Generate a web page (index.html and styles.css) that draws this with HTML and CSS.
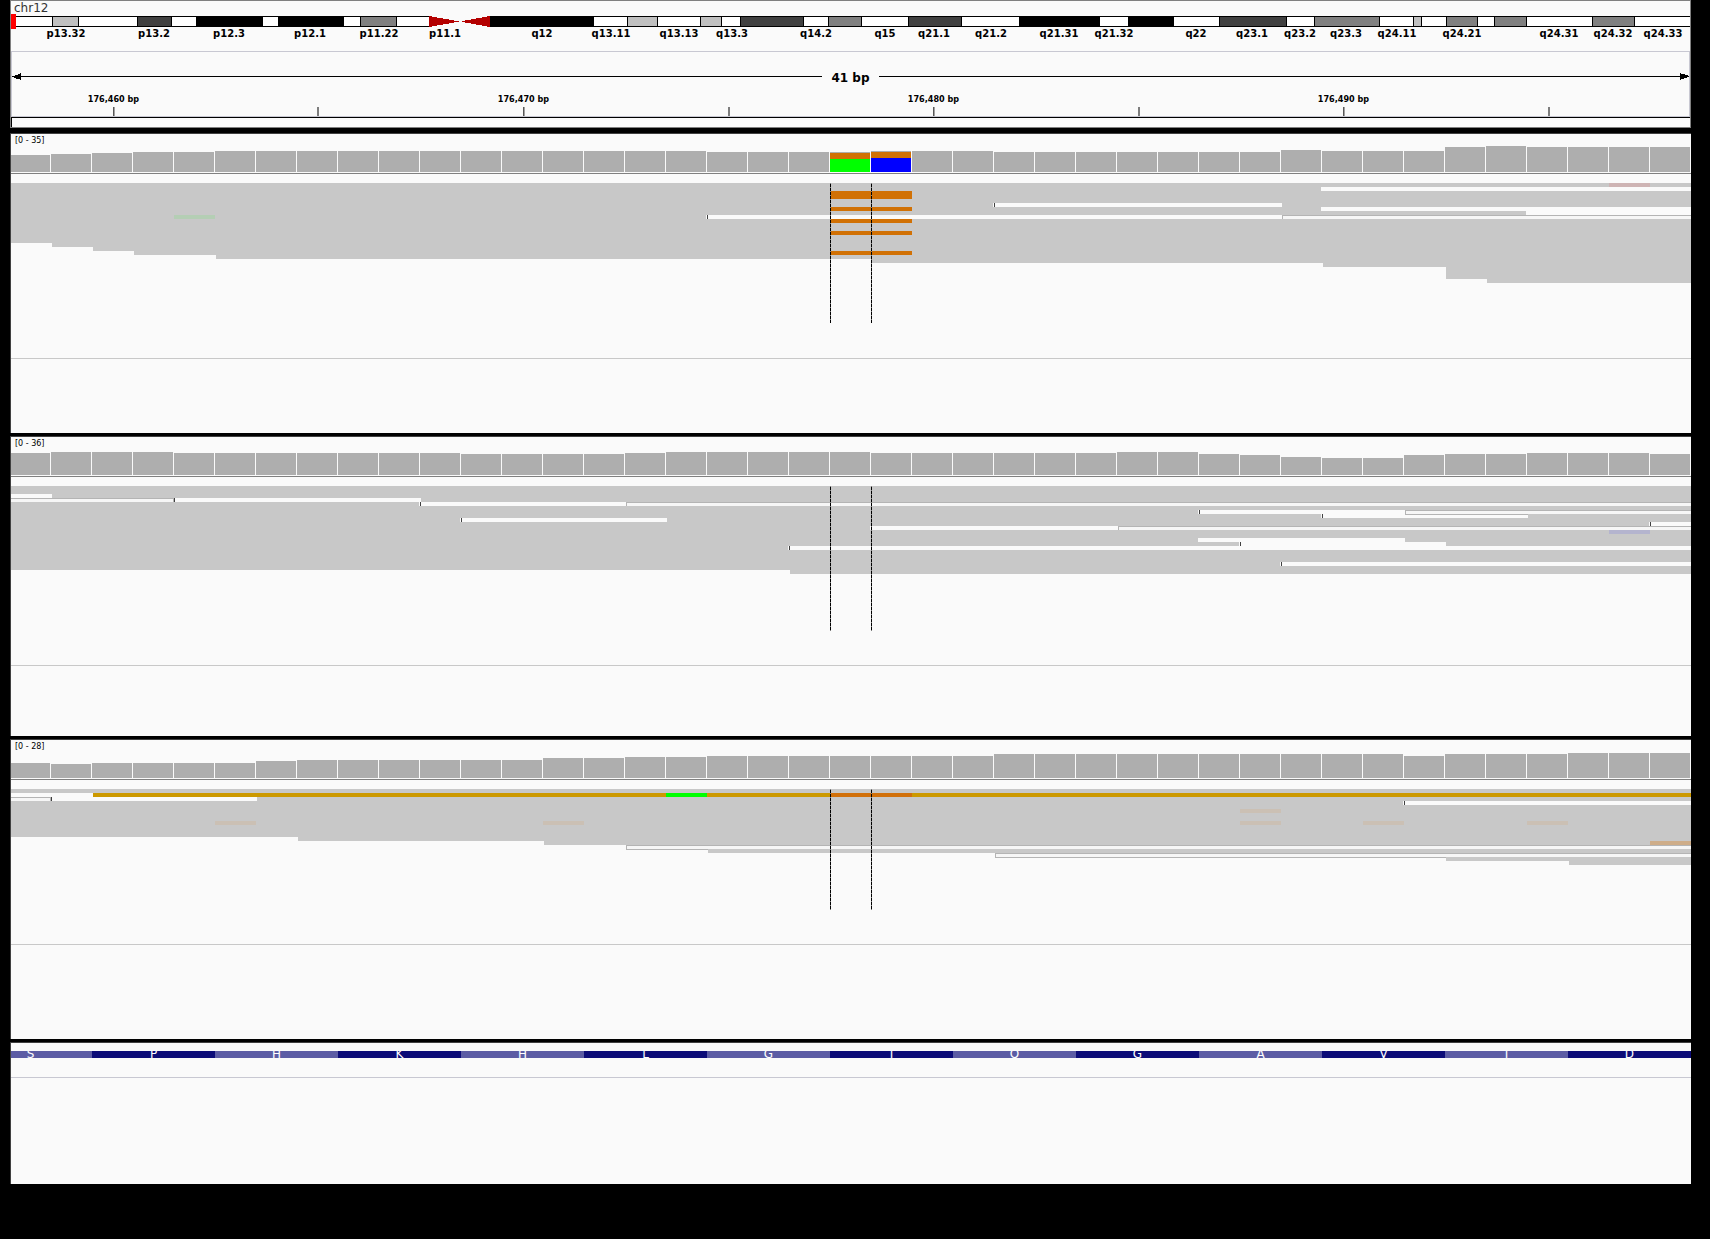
FILE: index.html
```html
<!DOCTYPE html>
<html lang="en">
<head>
<meta charset="utf-8">
<meta name="viewport" content="width=device-width, initial-scale=1">
<title>chr12:176,458-176,498</title>
<link rel="stylesheet" href="styles.css">
</head>
<body>
<main class="browser">
  <header class="locus">
    <h1 class="chromosome">chr12</h1>
    <svg class="ideogram" id="ideogram" viewBox="0 0 1679 15" preserveAspectRatio="none" role="img" aria-label="Chromosome ideogram"></svg>
    <div class="band-names" id="band-names"></div>
    <div class="ruler">
      <div class="span-row">
        <div class="arrow">
          <svg class="arrow-head" viewBox="0 0 9 7" aria-hidden="true"><path d="M0 3h3V2h3V1h2V0h1v7H8V6H4V5H2V4H0z"/></svg>
          <span class="arrow-line"></span>
        </div>
        <span class="span-size">41 bp</span>
        <div class="arrow">
          <span class="arrow-line"></span>
          <svg class="arrow-head" viewBox="0 0 9 7" aria-hidden="true"><path d="M9 3H8V2H5V1H1V0H0v7h1V6h3V5h3V4h2z"/></svg>
        </div>
      </div>
      <div class="ticks" id="ticks"></div>
    </div>
    <div class="region-bar"></div>
  </header>

  <section class="track">
    <p class="range">[0 - 35]</p>
    <svg class="coverage" viewBox="0 0 1680 26" preserveAspectRatio="none"></svg>
    <div class="reads reads-first"><svg class="alignments" viewBox="0 0 1680 140" preserveAspectRatio="none"></svg></div>
  </section>
  <section class="track">
    <p class="range">[0 - 36]</p>
    <svg class="coverage" viewBox="0 0 1680 26" preserveAspectRatio="none"></svg>
    <div class="reads reads-second"><svg class="alignments" viewBox="0 0 1680 145" preserveAspectRatio="none"></svg></div>
  </section>
  <section class="track">
    <p class="range">[0 - 28]</p>
    <svg class="coverage" viewBox="0 0 1680 26" preserveAspectRatio="none"></svg>
    <div class="reads reads-third"><svg class="alignments" viewBox="0 0 1680 121" preserveAspectRatio="none"></svg></div>
  </section>
  <section class="track gene-track">
    <div class="gene"><div class="codons">
      <span>S</span><span>P</span><span>H</span><span>K</span><span>H</span><span>L</span><span>G</span><span>I</span><span>Q</span><span>G</span><span>A</span><span>V</span><span>I</span><span>D</span>
    </div></div>
  </section>
</main>
<script src="tracks.js"></script>
</body>
</html>
```

FILE: styles.css
```css
* {
  box-sizing: border-box;
}

body {
  margin: 0;
  background: #000;
  color: #000;
  font-family: "DejaVu Sans", Verdana, sans-serif;
}

.browser {
  padding: 0 19px 0 10px;
}

svg {
  display: block;
  shape-rendering: crispEdges;
}

/* Header: chromosome name, ideogram and ruler */
.locus {
  margin-bottom: 5px;
  border: 1px solid #808080;
  background: #fafafa;
}

.chromosome {
  height: 13px;
  margin: 0;
  padding-left: 3px;
  color: #333;
  font-size: 12px;
  font-weight: 400;
  line-height: 15px;
}

.ideogram {
  width: 100%;
  height: 15px;
}

.band-names {
  position: relative;
  height: 22px;
  font-size: 10px;
  font-weight: 700;
  line-height: 10px;
}

.band-names span {
  position: absolute;
  top: 0;
  transform: translateX(-50%);
}

.ruler {
  padding-top: 19px;
  border: 1px solid #c8c8d2;
}

.span-row {
  display: flex;
  height: 14px;
}

.arrow {
  display: flex;
  flex: 1;
  align-items: center;
  height: 7px;
  margin-top: 2px;
}

.arrow-head {
  width: 9px;
  height: 7px;
}

.arrow-line {
  flex: 1;
  height: 1px;
  background: #000;
}

.span-size {
  padding: 0 9px;
  font-size: 12px;
  font-weight: 700;
  line-height: 14px;
}

.ticks {
  position: relative;
  height: 31px;
}

.tick {
  position: absolute;
  bottom: 0;
  display: flex;
  flex-direction: column;
  align-items: center;
  gap: 2px;
  transform: translateX(-50%);
  font-family: "DejaVu Sans Condensed", "DejaVu Sans", sans-serif;
  font-size: 9px;
  font-weight: 700;
  line-height: 12px;
  white-space: nowrap;
}

.tick-mark {
  width: 1px;
  height: 9px;
  background: #000;
}

.region-bar {
  height: 10px;
  border-top: 1px solid #000;
  border-left: 1px solid #000;
}

/* Alignment tracks */
.track {
  min-height: 300px;
  margin-bottom: 3px;
  border-top: 1px solid #404040;
  border-left: 1px solid #404040;
  background: #fafafa;
}

.range {
  height: 12px;
  margin: 0;
  padding-left: 4px;
  font-size: 8px;
  line-height: 14px;
}

.coverage {
  width: 100%;
  height: 26px;
}

.reads {
  margin-top: 1px;
  padding-top: 9px;
  border-top: 1px solid #808080;
  border-bottom: 1px solid #c8c8c8;
}

.reads-first {
  height: 186px;
}

.reads-second {
  height: 190px;
}

.reads-third {
  height: 166px;
}

.alignments {
  width: 100%;
}

/* Gene track */
.gene-track {
  min-height: 142px;
  margin-bottom: 0;
}

.gene {
  height: 35px;
  padding-top: 8px;
  border-bottom: 1px solid #c8c8d2;
  overflow: hidden;
}

.codons {
  display: grid;
  grid-template-columns: repeat(14, 1fr);
  width: calc(100% * 42 / 41 + 1px);
  margin-left: calc(-100% / 41 - 1px);
}

.codons span {
  height: 7px;
  overflow: hidden;
  background: #5c5ca4;
  color: #fff;
  font-size: 12px;
  line-height: 6px;
  text-align: center;
}

.codons span:nth-child(even) {
  background: #0c0c78;
}
```

FILE: tracks.js
```js
const NS = "http://www.w3.org/2000/svg";
const BASES = 41;
const BASE_WIDTH = 41;
const WIDTH = 1680;
const ROW = 4;

const GREY = "#c8c8c8", BACK = "#fafafa", ORANGE = "#d17105", GREEN = "#00ff00";

function rect(svg, x, y, w, h, fill) {
  const r = document.createElementNS(NS, "rect");
  Object.entries({ x, y, width: w, height: h, fill }).forEach(([k, v]) => r.setAttribute(k, v));
  svg.append(r);
}

// Left edge of a base column
const at = (base) => Math.min(base * BASE_WIDTH, WIDTH);

/* Ideogram: [start, end, shade] with one-pixel black seams */
const ideogram = document.getElementById("ideogram");
const W = "#fff", L = "#c0c0c0", M = "#808080", D = "#404040";
rect(ideogram, 0, 2, 1679, 11, "#000");
[
  [0, 41, W], [42, 67, L], [68, 126, W], [127, 160, D], [161, 185, W], [252, 267, W],
  [333, 349, W], [350, 385, M], [386, 418, W], [583, 616, W], [617, 646, L], [647, 689, W],
  [690, 710, L], [711, 729, W], [730, 792, D], [793, 817, W], [818, 850, M], [851, 897, W],
  [898, 950, D], [951, 1008, W], [1089, 1117, W], [1163, 1208, W], [1209, 1275, D],
  [1276, 1303, W], [1304, 1368, M], [1369, 1402, W], [1403, 1410, L], [1411, 1435, W],
  [1436, 1466, M], [1467, 1483, W], [1484, 1515, M], [1516, 1581, W], [1582, 1623, M], [1624, 1679, W]
].forEach(([a, b, c]) => rect(ideogram, a, 3, b - a, 9, c));
rect(ideogram, 418, 2, 61, 11, BACK);
const centromere = document.createElementNS(NS, "path");
centromere.setAttribute("d", "M418 2 449 7.5 418 13zM479 2 449 7.5 479 13z");
centromere.setAttribute("fill", "#b40000");
ideogram.append(centromere);
rect(ideogram, 448, 7, 3, 1, BACK);
rect(ideogram, 0, 0, 5, 15, "#ff0000");

const names = document.getElementById("band-names");
[
  ["p13.32", 55], ["p13.2", 143], ["p12.3", 218], ["p12.1", 299], ["p11.22", 368], ["p11.1", 434],
  ["q12", 531], ["q13.11", 600], ["q13.13", 668], ["q13.3", 721], ["q14.2", 805], ["q15", 874],
  ["q21.1", 923], ["q21.2", 980], ["q21.31", 1048], ["q21.32", 1103], ["q22", 1185], ["q23.1", 1241],
  ["q23.2", 1289], ["q23.3", 1335], ["q24.11", 1386], ["q24.21", 1451], ["q24.31", 1548],
  ["q24.32", 1602], ["q24.33", 1652]
].forEach(([name, x]) => {
  const s = document.createElement("span");
  s.textContent = name;
  s.style.left = (x / 1679) * 100 + "%";
  names.append(s);
});

const ticks = document.getElementById("ticks");
["176,460 bp", "", "176,470 bp", "", "176,480 bp", "", "176,490 bp", ""].forEach((label, k) => {
  const t = document.createElement("div");
  t.className = "tick";
  t.style.left = ((101.5 + 205 * k) / 1677) * 100 + "%";
  if (label) {
    const s = document.createElement("span");
    s.textContent = label;
    t.append(s);
  }
  const m = document.createElement("span");
  m.className = "tick-mark";
  t.append(m);
  ticks.append(t);
});

/*
 * depth:   [height, number of bases]
 * steps:   [first base, rows] lower edge of the read pile
 * gaps:    [row, from, to, tick] space between two reads
 * hollow:  [row, from, to, lower edge to] reads with mapping quality zero
 * reads:   [row, from, to, colour]
 * marks:   [row, from, to, colour] mismatched bases
 */
const tracks = [
  {
    depth: [[17, 1], [18, 1], [19, 1], [20, 2], [21, 12], [20, 4], [21, 3], [20, 7], [22, 1], [21, 3], [25, 1], [26, 1], [25, 4]],
    alleles: [[20, 13, 6, GREEN], [21, 14, 6, "#0000ff"]],
    steps: [[0, 15], [1, 16], [2, 17], [3, 18], [5, 19], [21, 20], [32, 21], [35, 24], [36, 25]],
    gaps: [[5, 24, 31, 1], [8, 17, 31, 1], [1, 32, 41], [6, 32, 41], [7, 37, 41]],
    hollow: [[8, 31, 41]],
    reads: [],
    marks: [
      [8, 4, 5, "#b4ceb4"], [0, 39, 40, "#ceb4b4"],
      [2, 20, 22, ORANGE], [3, 20, 22, ORANGE], [6, 20, 22, ORANGE],
      [9, 20, 22, ORANGE], [12, 20, 22, ORANGE], [17, 20, 22, ORANGE]
    ],
    guide: 140
  },
  {
    depth: [[22, 1], [23, 3], [22, 7], [21, 4], [22, 1], [23, 5], [22, 6], [23, 2], [21, 1], [20, 1], [18, 1], [17, 2], [20, 1], [21, 2], [22, 3], [21, 1]],
    alleles: [],
    steps: [[0, 21], [19, 22]],
    gaps: [
      [2, 0, 1], [3, 4, 10, 1], [4, 10, 15, 1], [8, 11, 16, 1], [10, 21, 27], [15, 19, 41, 1],
      [6, 29, 34, 1], [7, 32, 37, 1], [9, 40, 41, 1], [13, 29, 34], [14, 30, 35, 1], [19, 31, 41, 1]
    ],
    hollow: [[3, 0, 4], [4, 15, 41], [10, 27, 41], [6, 34, 41, 37]],
    reads: [],
    marks: [[11, 39, 40, "#b4b4ce"]],
    guide: 145
  },
  {
    depth: [[15, 1], [14, 1], [15, 4], [17, 1], [18, 6], [20, 2], [21, 2], [22, 7], [24, 10], [22, 1], [24, 3], [25, 3]],
    alleles: [],
    steps: [[0, 12], [7, 13], [13, 14]],
    gaps: [[1, 0, 2], [2, 1, 6, 1], [3, 34, 41, 1]],
    hollow: [[2, 0, 1], [14, 15, 41, 17], [16, 24, 41, 35]],
    reads: [[1, 2, 41, "#cc9900"], [15, 17, 41, GREY], [17, 35, 41, GREY], [18, 38, 41, GREY]],
    marks: [
      [1, 16, 17, GREEN], [1, 20, 22, "#d1700a"],
      [5, 30, 31, "#cbc0b4"], [8, 5, 6, "#cbc0b4"], [8, 13, 14, "#cbc0b4"], [8, 30, 31, "#cbc0b4"],
      [8, 33, 34, "#cbc0b4"], [8, 37, 38, "#cbc0b4"], [13, 40, 41, "#cead89"]
    ],
    guide: 121
  }
];

document.querySelectorAll(".coverage").forEach((svg, n) => {
  let base = 0;
  tracks[n].depth.forEach(([h, count]) => {
    for (let i = 0; i < count; i++, base++) rect(svg, at(base) - 1, 26 - h, 40, h, "#aeaeae");
  });
  tracks[n].alleles.forEach(([b, low, high, colour]) => {
    rect(svg, at(b) - 1, 26 - low, 40, low, colour);
    rect(svg, at(b) - 1, 26 - low - high, 40, high, ORANGE);
  });
});

document.querySelectorAll(".alignments").forEach((svg, n) => {
  const t = tracks[n];
  svg.style.height = t.guide + "px";
  t.steps.forEach(([from, rows], i) => {
    const to = t.steps[i + 1] ? t.steps[i + 1][0] : BASES;
    rect(svg, at(from), 0, at(to) - at(from), rows * ROW, GREY);
  });
  t.gaps.forEach(([row, from, to, tick]) => {
    const x = at(from) - 2;
    rect(svg, x, row * ROW, at(to) - x, ROW, BACK);
    if (tick) rect(svg, x + 1, row * ROW, 1, ROW, "#404040");
  });
  t.hollow.forEach(([row, from, to, edge]) => {
    const x = at(from), end = to === BASES ? WIDTH : at(to) - 1, y = row * ROW;
    rect(svg, x, y, end - x, ROW, "#f6f6f6");
    rect(svg, x, y, end - x, 1, "#b4b4b4");
    rect(svg, from ? x : end - 1, y, 1, ROW, "#b4b4b4");
    if (to !== BASES) rect(svg, end, y, 1, ROW, "#404040");
    if (edge) rect(svg, x, y + ROW, at(edge) - x, 1, "#b4b4b4");
  });
  t.reads.forEach(([row, from, to, colour]) => {
    rect(svg, at(from), row * ROW, at(to) - at(from), ROW, colour);
  });
  t.marks.forEach(([row, from, to, colour]) => {
    const end = to === BASES ? WIDTH : at(to) - 1;
    rect(svg, at(from) - 1, row * ROW, end - at(from) + 1, ROW, colour);
  });
  [20, 21].forEach((b) => {
    for (let y = 0; y < t.guide; y += 4) {
      rect(svg, at(b) - 1, y, 1, 1, "#808080");
      rect(svg, at(b) - 1, y + 1, 1, Math.min(3, t.guide - y - 1), "#000");
    }
  });
});
```
